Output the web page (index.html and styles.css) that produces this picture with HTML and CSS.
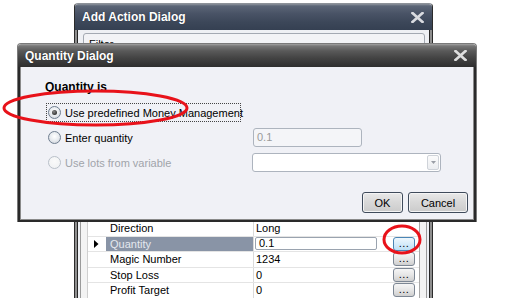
FILE: index.html
```html
<!DOCTYPE html>
<html>
<head>
<meta charset="utf-8">
<link rel="stylesheet" href="styles.css">
</head>
<body>
<div class="win back">
  <div class="titlebar back-title">
    <span class="title-text">Add Action Dialog</span>
    <svg class="close" width="13" height="11" viewBox="0 0 13 11"><path d="M1.5 1 L11.5 10 M11.5 1 L1.5 10" stroke="#d9dbe0" stroke-width="2.6" stroke-linecap="square"/></svg>
  </div>
  <div class="back-body">
    <div class="groupbox"><span class="legend">Filter</span></div>
    <div class="grid-frame">
      <div class="grid">
        <div class="row">
          <div class="rh"></div>
          <div class="name">Direction</div>
          <div class="val">Long</div>
        </div>
        <div class="row sel">
          <div class="rh"><svg width="5" height="8" viewBox="0 0 5 8"><polygon points="0,0 4.5,4 0,8" fill="#000"/></svg></div>
          <div class="name">Quantity</div>
          <div class="val"><span class="editor">0.1</span><span class="dots hot">...</span></div>
        </div>
        <div class="row">
          <div class="rh"></div>
          <div class="name">Magic Number</div>
          <div class="val"><span>1234</span><span class="dots">...</span></div>
        </div>
        <div class="row">
          <div class="rh"></div>
          <div class="name">Stop Loss</div>
          <div class="val"><span>0</span><span class="dots">...</span></div>
        </div>
        <div class="row">
          <div class="rh"></div>
          <div class="name">Profit Target</div>
          <div class="val"><span>0</span><span class="dots">...</span></div>
        </div>
      </div>
    </div>
  </div>
</div>

<div class="win front">
  <div class="titlebar front-title">
    <span class="title-text">Quantity Dialog</span>
    <svg class="close" width="13" height="11" viewBox="0 0 13 11"><path d="M1.5 1 L11.5 10 M11.5 1 L1.5 10" stroke="#dedede" stroke-width="2.6" stroke-linecap="square"/></svg>
  </div>
  <div class="front-body">
    <div class="heading">Quantity is</div>
    <div class="options">
      <div class="opt focus"><span class="radio checked"></span><span>Use predefined Money Management</span></div>
      <div class="cell-empty"></div>
      <div class="opt"><span class="radio"></span><span>Enter quantity</span></div>
      <div class="ctl"><span class="textbox">0.1</span></div>
      <div class="opt disabled"><span class="radio"></span><span>Use lots from variable</span></div>
      <div class="ctl"><span class="combo"><span class="combo-btn"><svg width="5" height="3" viewBox="0 0 5 3"><polygon points="0,0 5,0 2.5,3" fill="#9a9ea6"/></svg></span></span></div>
    </div>
    <div class="buttons">
      <span class="btn ok">OK</span>
      <span class="btn cancel">Cancel</span>
    </div>
  </div>
</div>

<svg class="annot" width="508" height="298" viewBox="0 0 508 298">
  <ellipse cx="95.5" cy="108" rx="91.5" ry="17" fill="none" stroke="#e8121a" stroke-width="3"/>
  <ellipse cx="402" cy="239.5" rx="18" ry="13.5" fill="none" stroke="#e8121a" stroke-width="3"/>
</svg>
</body>
</html>
```
FILE: styles.css
```css
html, body {
  margin: 0;
  padding: 0;
  background: #ffffff;
  width: 508px;
  height: 298px;
  overflow: hidden;
  font-family: "Liberation Sans", Arial, sans-serif;
  font-size: 11px;
  color: #000;
}

.win {
  position: absolute;
  box-sizing: border-box;
  display: flex;
  flex-direction: column;
}

.titlebar {
  display: flex;
  align-items: center;
  justify-content: space-between;
  color: #fff;
  font-weight: bold;
  font-size: 12px;
  box-sizing: border-box;
  border-radius: 3px 3px 0 0;
}
.title-text {
  text-shadow: 0 0 1px rgba(0,0,0,0.5);
}

/* ---------- back dialog ---------- */
.back {
  left: 74px;
  top: 3px;
  width: 359px;
  height: 300px;
  border: 1px solid #2b2b2b;
  border-top-color: #8d9299;
  border-radius: 4px 4px 0 0;
}
.back-title {
  height: 26px;
  padding: 0 8px 0 7px;
  background: linear-gradient(to bottom, #8c929c 0, #5c6677 2px, #4a5467 9px, #3c4759 18px, #354052 100%);
}
.back-title .close { margin-top: 1px; }

.back-body {
  flex: 1;
  background: #eef0f4;
  border-left: 2px solid #8e8e8e;
  border-right: 2px solid #8e8e8e;
  box-shadow: inset 1px 0 0 #262626, inset -1px 0 0 #262626;
  display: flex;
  flex-direction: column;
}

.groupbox {
  margin: 3px 5px 0 6px;
  height: 186px;
  box-sizing: border-box;
  border: 1px solid #a3a9b2;
  border-radius: 3px;
  padding: 4px 5px;
  background: #f2f3f6;
}
.legend { font-size: 11px; }

.grid-frame {
  margin: 2px 3px 0 3px;
  flex: 1;
  border-left: 1px solid #9a9a9a;
  border-right: 1px solid #9a9a9a;
  padding: 0 6px;
  background: #f3f3f3;
}
.grid {
  background: #fff;
  border-left: 1px solid #cfcfcf;
  border-right: 1px solid #a8a8a8;
  height: 100%;
}
.row {
  display: grid;
  grid-template-columns: 18px 148px 1fr;
  height: 15.5px;
  box-sizing: border-box;
  border-bottom: 1px solid #e4e4e4;
}
.rh {
  display: flex;
  align-items: center;
  justify-content: center;
  background: #fff;
}
.rh svg { margin-left: -2px; }
.name {
  padding-left: 4px;
  border-right: 1px solid #dadada;
  line-height: 14.5px;
  white-space: nowrap;
}
.val {
  display: flex;
  align-items: center;
  justify-content: space-between;
  padding: 0 4px 0 2px;
  white-space: nowrap;
}
.sel .name {
  background: #8994a6;
  color: #e4e8ee;
}
.editor {
  flex: 0 0 122px;
  height: 13px;
  box-sizing: border-box;
  border: 1px solid #9aa3af;
  border-radius: 2px;
  padding: 0 3px;
  line-height: 11px;
  margin-left: -1px;
}
.dots {
  width: 22px;
  height: 14px;
  box-sizing: border-box;
  border: 1px solid #7d8794;
  border-radius: 3px;
  background: linear-gradient(to bottom, #f6f6f6 0, #e6e6e6 50%, #cfcfcf 100%);
  text-align: center;
  line-height: 10px;
  font-size: 11px;
  letter-spacing: 0.5px;
}
.dots.hot {
  border-color: #4a85b5;
  background: linear-gradient(to bottom, #eef7fd 0, #d7ecfa 50%, #bcdff5 100%);
}

/* ---------- front dialog ---------- */
.front {
  left: 17px;
  top: 43px;
  width: 460px;
  height: 179px;
  border: 1px solid #7a7a7a;
  border-bottom: none;
  border-radius: 4px 4px 0 0;
}
.front-title {
  height: 23px;
  padding: 0 9px 0 7px;
  background: linear-gradient(to bottom, #a3a3a3 0, #777 2px, #595959 7px, #434343 14px, #2e2e2e 100%);
}
.front-body {
  flex: 1;
  background: #f0f1f6;
  border: 2px solid #2a2a2a;
  border-top: none;
  box-shadow: inset 1px 0 0 #8a8a8a, inset -1px 0 0 #8a8a8a, inset 0 -1px 0 #8a8a8a;
  padding: 13px 6px 0 25px;
  display: flex;
  flex-direction: column;
}
.heading {
  font-weight: bold;
  font-size: 12px;
  line-height: 14px;
  margin-bottom: 9px;
}
.options {
  display: grid;
  grid-template-columns: 207px 189px;
  grid-auto-rows: 19px;
  row-gap: 6px;
  margin-left: 1px;
}
.opt {
  display: flex;
  align-items: center;
  gap: 4px;
  padding-left: 2px;
  white-space: nowrap;
  box-sizing: border-box;
}
.opt.focus {
  width: 195px;
  border: 1px dotted #444;
  padding-left: 1px;
}
.opt.disabled { color: #a0a4aa; }
.radio {
  width: 13px;
  height: 13px;
  box-sizing: border-box;
  border-radius: 50%;
  border: 1px solid #6f7e90;
  background: radial-gradient(circle at 50% 40%, #ffffff 0, #e8ebef 50%, #c9ced6 100%);
  position: relative;
  flex: none;
}
.disabled .radio {
  border-color: #b9c0c9;
  background: radial-gradient(circle at 50% 40%, #fafafa 0, #eef0f2 100%);
}
.radio.checked::after {
  content: "";
  position: absolute;
  left: 3px;
  top: 3px;
  width: 5px;
  height: 5px;
  border-radius: 50%;
  background: radial-gradient(circle at 40% 35%, #8a8a8a 0, #333 70%);
}
.ctl {
  display: flex;
  align-items: stretch;
}
.textbox {
  width: 109px;
  box-sizing: border-box;
  border: 1px solid #adb4be;
  border-radius: 3px;
  background: #f4f5f8;
  color: #9a9a9a;
  padding: 0 3px;
  line-height: 17px;
  font-size: 11px;
}
.combo {
  width: 189px;
  margin-left: -1px;
  box-sizing: border-box;
  border: 1px solid #adb4be;
  border-radius: 3px;
  background: #fff;
  display: flex;
  justify-content: flex-end;
  align-items: center;
  padding-right: 1px;
}
.combo-btn {
  width: 12px;
  height: 15px;
  box-sizing: border-box;
  border: 1px solid #cfd3d9;
  border-radius: 2px;
  background: linear-gradient(to bottom, #fbfbfb, #eceef1);
  display: flex;
  align-items: center;
  justify-content: center;
}
.buttons {
  display: flex;
  justify-content: flex-end;
  gap: 5px;
  margin-top: 20px;
}
.btn {
  height: 21px;
  box-sizing: border-box;
  border: 1px solid #3f4b5b;
  border-radius: 3px;
  background: linear-gradient(to bottom, #e9e9e9 0, #d9d9d9 45%, #cbcbcb 100%);
  box-shadow: inset 0 0 0 1px #f4f4f4;
  display: flex;
  align-items: center;
  justify-content: center;
  font-size: 11px;
}
.btn.ok { width: 41px; }
.btn.cancel { width: 60px; }

.annot {
  position: absolute;
  left: 0;
  top: 0;
  pointer-events: none;
}
```
